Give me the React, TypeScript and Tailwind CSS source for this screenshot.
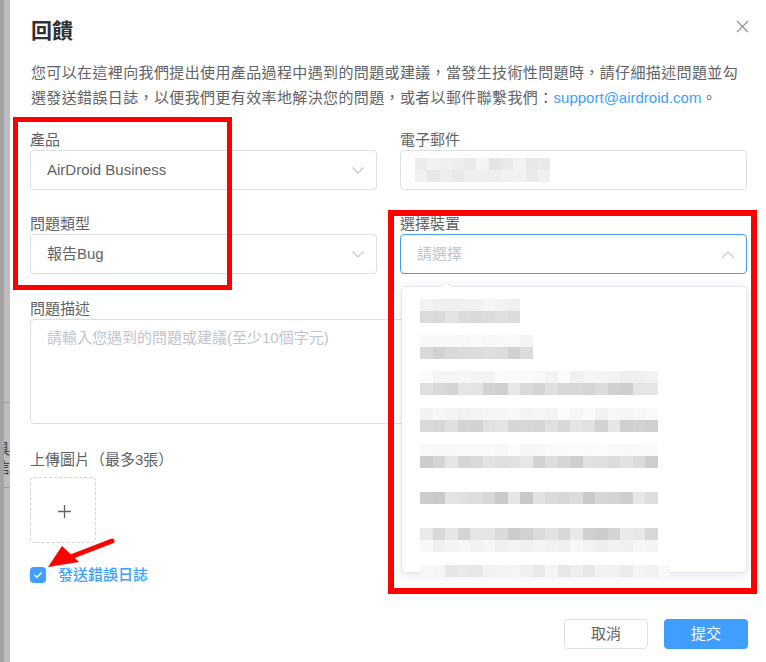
import type { ReactNode } from 'react';

const FONT = "font-['Liberation_Sans','Noto_Sans_CJK_TC',sans-serif]";

// deterministic grey mosaic used for the blurred (redacted) values
function rand(seed: number) {
  const x = Math.sin(seed * 12.9898) * 43758.5453;
  return x - Math.floor(x);
}

function grey(seed: number, lo: number, hi: number) {
  const v = Math.round(lo + (hi - lo) * rand(seed));
  return `rgb(${v},${v},${v + 1})`;
}

type Row = [number, number] | null;

const ITEMS: { cells: number; rows: Row[] }[] = [
  { cells: 8, rows: [[238, 246], [216, 232], null] },
  { cells: 9, rows: [[244, 250], [206, 224], null] },
  { cells: 19, rows: [[238, 251], [204, 232], null] },
  { cells: 19, rows: [[240, 251], [202, 234], null] },
  { cells: 19, rows: [[246, 252], [202, 232], null] },
  { cells: 19, rows: [null, [200, 232], null] },
  { cells: 19, rows: [null, [202, 236], [238, 248]] },
  { cells: 20, rows: [null, [230, 248], null] },
];

function Mosaic({ cells, rows, seed, cellW = 12.5 }: { cells: number; rows: Row[]; seed: number; cellW?: number }) {
  return (
    <div className="flex flex-col">
      {rows.map((r, ri) => (
        <div key={ri} className="flex h-3">
          {r &&
            Array.from({ length: cells }).map((_, ci) => (
              <div
                key={ci}
                className="h-3 shrink-0"
                style={{ width: cellW, background: grey(seed * 97 + ri * 31 + ci, r[0], r[1]) }}
              />
            ))}
        </div>
      ))}
    </div>
  );
}

function Chevron({ up = false }: { up?: boolean }) {
  return (
    <svg width="12" height="7" viewBox="0 0 12 7" fill="none" className="shrink-0">
      <path d={up ? 'M0.5 6.5L6 1L11.5 6.5' : 'M0.5 0.5L6 6L11.5 0.5'} stroke="#c0c4cc" strokeWidth="1.1" />
    </svg>
  );
}

function Field({ label, children }: { label: string; children: ReactNode }) {
  return (
    <div className="flex flex-col">
      <div className="h-5 text-[15px] leading-5 text-[#606266]">{label}</div>
      {children}
    </div>
  );
}

function Select({ value, placeholder, open = false }: { value?: string; placeholder?: string; open?: boolean }) {
  return (
    <div
      className={`flex h-10 items-center justify-between rounded border pl-4 pr-3 text-[15px] ${
        open ? 'border-[#409eff]' : 'border-[#dcdfe6]'
      }`}
    >
      <span className={value ? 'text-[#606266]' : 'text-[#c0c4cc]'}>{value ?? placeholder}</span>
      <Chevron up={open} />
    </div>
  );
}

export default function App() {
  return (
    <div className={`relative flex h-[662px] w-[766px] overflow-hidden bg-white ${FONT}`}>
      {/* page behind the dialog */}
      <div className="flex w-[10px] shrink-0">
        <div className="w-1 bg-[#a3a3a3]" />
        <div className="flex w-[6px] flex-col overflow-hidden bg-[#bdbdbd]">
          <div className="h-[402px]" />
          <div className="h-px bg-[#a0a0a0]" />
          <div className="mt-[36px] -ml-[9px] text-[15px] leading-[19px] text-[#444]">具</div>
          <div className="-ml-[9px] text-[15px] leading-[19px] text-[#444]">信</div>
          <div className="mt-[10px] h-px bg-[#a0a0a0]" />
        </div>
      </div>

      {/* dialog */}
      <div className="flex flex-1 flex-col pt-4 pl-5 pr-[19px]">
        <div className="flex items-start justify-between">
          <h1 className="pl-px text-[21px] font-bold leading-[30px] text-[#303133]">回饋</h1>
          <svg width="13" height="13" viewBox="0 0 13 13" className="-mr-[2px] mt-[4px]">
            <path d="M1 1L12 12M12 1L1 12" stroke="#909399" strokeWidth="1.2" />
          </svg>
        </div>

        <p className="mt-[14px] pl-px text-[15px] leading-[25px] tracking-[0.37px] text-[#606266]">
          您可以在這裡向我們提出使用產品過程中遇到的問題或建議，當發生技術性問題時，請仔細描述問題並勾
          <br />
          選發送錯誤日誌，以便我們更有效率地解決您的問題，或者以郵件聯繫我們：
          <span className="tracking-normal text-[#409eff]">support@airdroid.com</span>。
        </p>

        <div className="mt-5 grid grid-cols-2 gap-x-[23px] gap-y-6">
          <Field label="產品">
            <Select value="AirDroid Business" />
          </Field>
          <Field label="電子郵件">
            <div className="flex h-10 items-center rounded border border-[#dcdfe6] pl-[14px]">
              <Mosaic cells={11} cellW={12.3} seed={3} rows={[[228, 244], [226, 244]]} />
            </div>
          </Field>
          <Field label="問題類型">
            <Select value="報告Bug" />
          </Field>
          <Field label="選擇裝置">
            <Select placeholder="請選擇" open />
          </Field>
        </div>

        <div className="mt-[25px]">
          <Field label="問題描述">
            <div className="h-[105px] rounded border border-[#dcdfe6] px-4 pt-[5px] text-[15px] leading-[25px] text-[#c0c4cc]">
              請輸入您遇到的問題或建議(至少10個字元)
            </div>
          </Field>
        </div>

        <div className="mt-[26px] h-5 text-[15px] leading-5 text-[#606266]">上傳圖片（最多3張）</div>
        <div className="mt-[7px] flex h-[66px] w-[66px] items-center justify-center rounded-sm border border-dashed border-[#d0d3da]">
          <svg width="13" height="13" viewBox="0 0 13 13" className="ml-[2px] mt-[2px]">
            <path d="M6.5 0V13M0 6.5H13" stroke="#606266" strokeWidth="1.3" />
          </svg>
        </div>

        <label className="mt-6 flex h-4 items-center gap-3">
          <span className="flex h-4 w-4 items-center justify-center rounded-sm bg-[#409eff]">
            <svg width="10" height="8" viewBox="0 0 10 8">
              <path d="M1.5 4L4 6.3L8.7 1.5" stroke="#fff" strokeWidth="1.3" fill="none" />
            </svg>
          </span>
          <span className="text-[15px] font-medium leading-4 text-[#409eff]">發送錯誤日誌</span>
        </label>

        <div className="-mr-px mt-9 flex justify-end gap-4">
          <button className="h-[30px] w-[84px] rounded border border-[#dcdfe6] bg-white text-[15px] text-[#606266]">
            取消
          </button>
          <button className="h-[30px] w-[84px] rounded bg-[#409eff] text-[15px] text-white">提交</button>
        </div>
      </div>

      {/* open device dropdown */}
      <div className="absolute left-[401px] top-[286px] h-[287px] w-[346px] rounded border border-[#e4e7ed] bg-white pl-[18px] pt-[12px] shadow-[0_2px_12px_0_rgba(0,0,0,0.1)]">
        <div className="absolute -top-[6px] left-[38px] h-0 w-0 border-x-[6px] border-b-[6px] border-x-transparent border-b-[#e4e7ed]" />
        <div className="absolute -top-[5px] left-[38px] h-0 w-0 border-x-[6px] border-b-[6px] border-x-transparent border-b-white" />
        <div className="flex flex-col">
          {ITEMS.map((it, i) => (
            <div key={i} className={i === 2 || i === 6 ? 'h-[37px]' : 'h-[36px]'}>
              <Mosaic cells={it.cells} rows={it.rows} seed={i + 10} />
            </div>
          ))}
        </div>
      </div>

      {/* red annotations */}
      <div className="absolute left-[13px] top-[117px] h-[173px] w-[219px] border-[5px] border-[#ff0000]" />
      <div className="absolute left-[388px] top-[210px] h-[384px] w-[369px] border-[6px] border-[#ff0000]" />
      <svg className="absolute left-0 top-0" width="766" height="662" viewBox="0 0 766 662">
        <path d="M112 541L68 558" stroke="#ff0000" strokeWidth="5" strokeLinecap="round" />
        <path d="M48 567L62 546L79 562Z" fill="#ff0000" />
      </svg>
    </div>
  );
}
